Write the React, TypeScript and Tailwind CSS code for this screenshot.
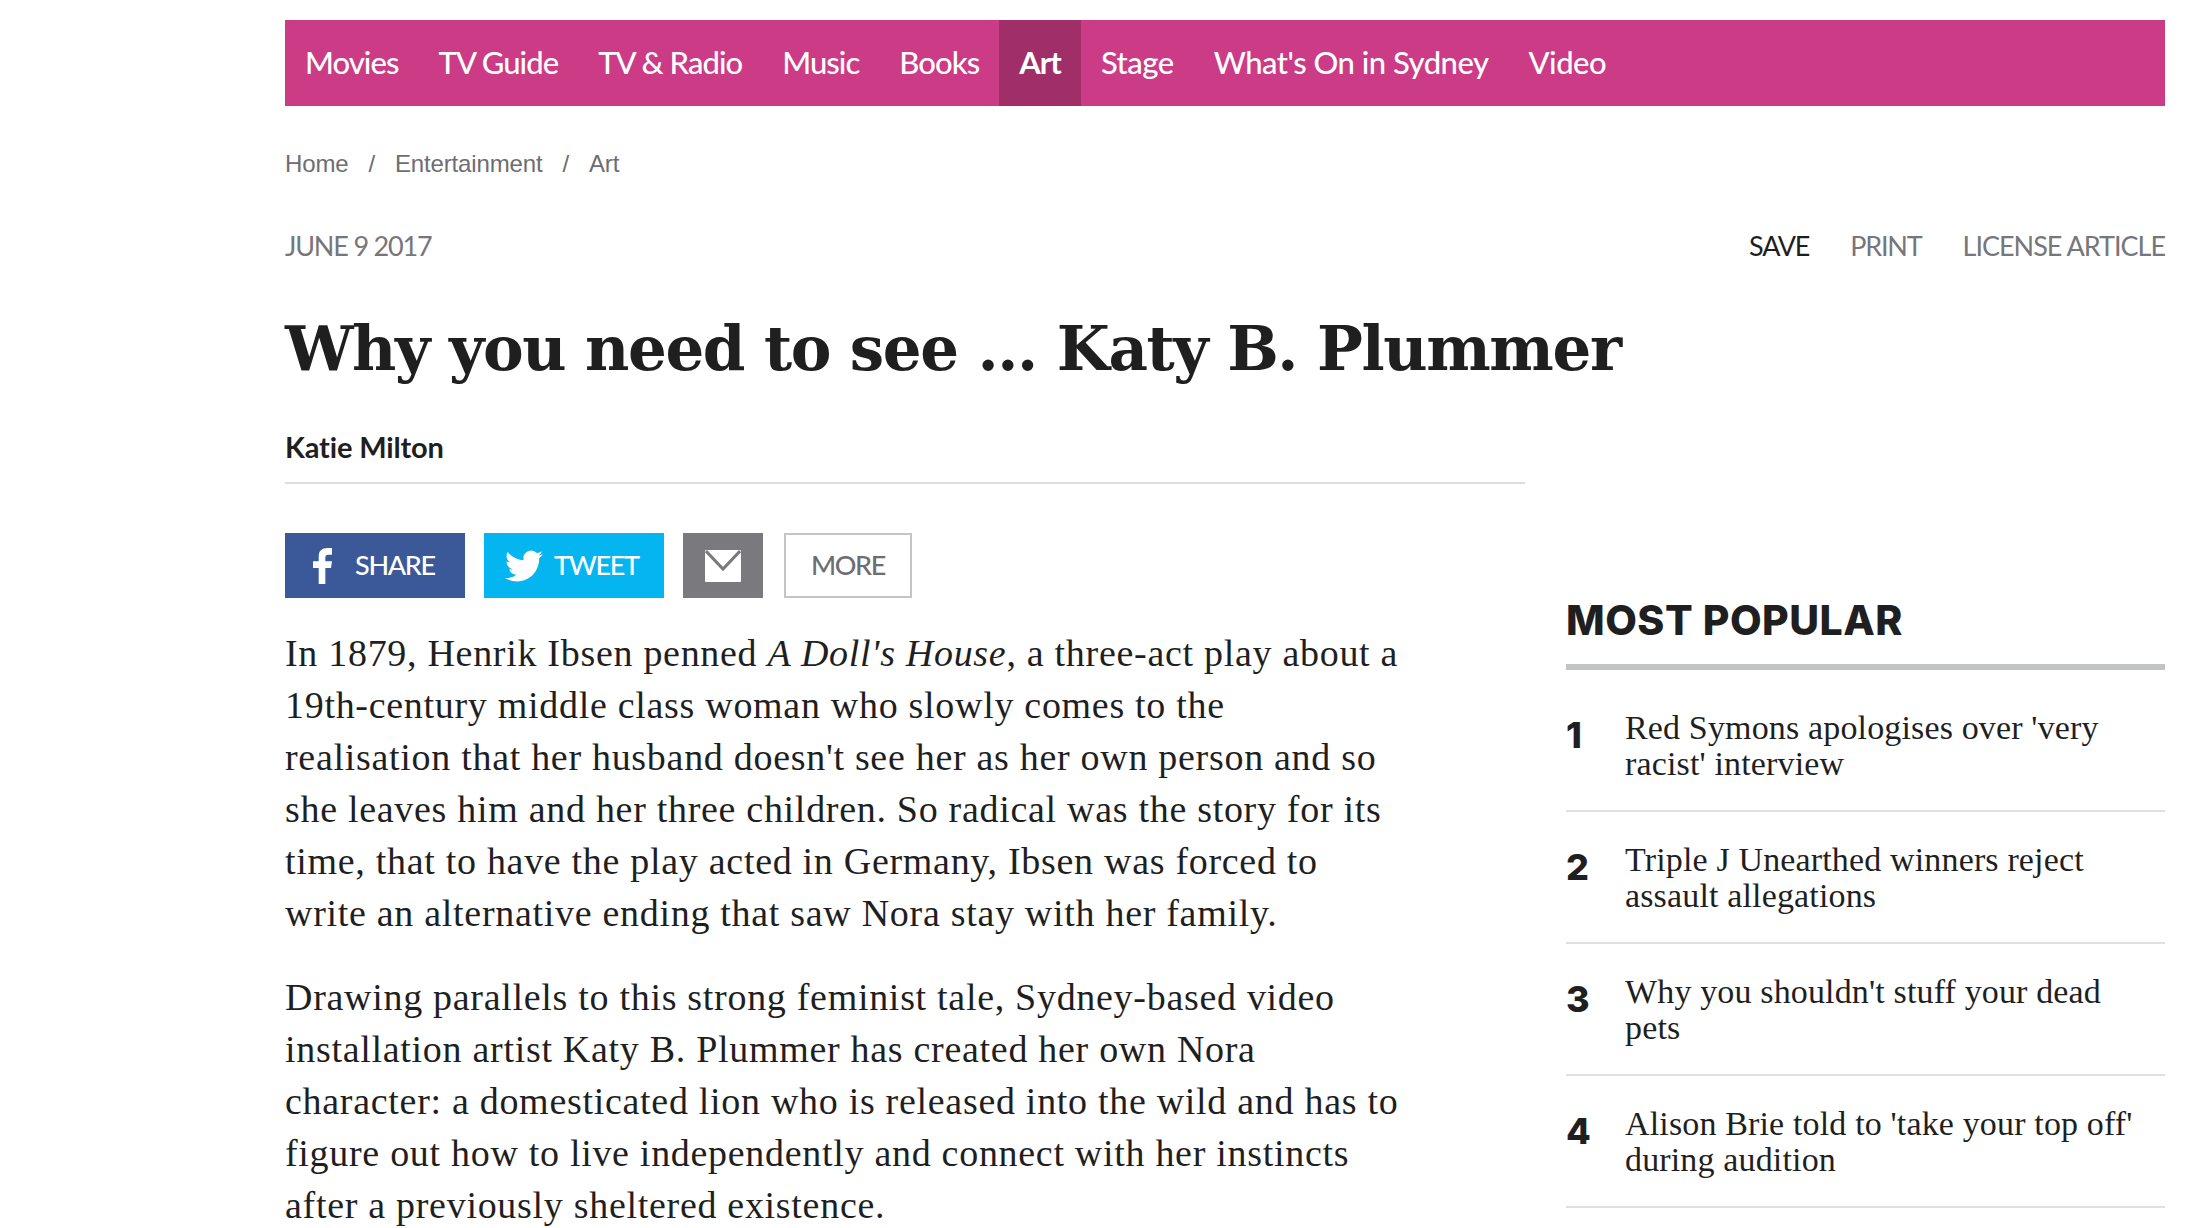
const navItems = ['Movies', 'TV Guide', 'TV & Radio', 'Music', 'Books', 'Art', 'Stage', "What's On in Sydney", 'Video'];
const looseItems = ['Stage', "What's On in Sydney", 'Video'];

const popular = [
  { n: 1, lines: ["Red Symons apologises over 'very", "racist' interview"] },
  { n: 2, lines: ['Triple J Unearthed winners reject', 'assault allegations'] },
  { n: 3, lines: ["Why you shouldn't stuff your dead", 'pets'] },
  { n: 4, lines: ["Alison Brie told to 'take your top off'", 'during audition'] },
];

const para2 = [
  'Drawing parallels to this strong feminist tale, Sydney-based video',
  'installation artist Katy B. Plummer has created her own Nora',
  'character: a domesticated lion who is released into the wild and has to',
  'figure out how to live independently and connect with her instincts',
  'after a previously sheltered existence.',
];

const para1 = [
  '19th-century middle class woman who slowly comes to the',
  "realisation that her husband doesn't see her as her own person and so",
  'she leaves him and her three children. So radical was the story for its',
  'time, that to have the play acted in Germany, Ibsen was forced to',
  'write an alternative ending that saw Nora stay with her family.',
];

const sans = "font-['Lato',sans-serif]";
const serif = "font-['Liberation_Serif',serif]";

export default function App() {
  return (
    <div className="h-[1228px] overflow-hidden bg-white pl-[285px] pr-[38px] pt-5 text-[#1f1f1f]">
      <nav className={`flex h-[86px] items-center bg-[#cc3b85] ${sans} text-[31px] text-white`}>
        {navItems.map(item => (
          <a
            key={item}
            className={`flex h-full items-center px-5 pb-0.5 ${looseItems.includes(item) ? 'tracking-[-0.5px]' : 'tracking-[-0.95px]'} ${item === 'Art' ? 'bg-[#a02f69] font-bold' : 'font-medium'}`}
          >
            {item}
          </a>
        ))}
      </nav>

      <div className="mt-11 flex h-7 items-center gap-5 font-['Liberation_Sans',sans-serif] text-[24px] tracking-[-0.15px] text-[#6d6d72]">
        <span>Home</span>
        <span>/</span>
        <span>Entertainment</span>
        <span>/</span>
        <span>Art</span>
      </div>

      <div className={`mt-[54px] flex h-7 items-center justify-between ${sans} text-[27px] tracking-[-1.2px] text-[#77767b]`}>
        <span>JUNE 9 2017</span>
        <div className="flex gap-[41px]">
          <span className="text-[#1f1f1f]">SAVE</span>
          <span>PRINT</span>
          <span className="tracking-[-1px]">LICENSE ARTICLE</span>
        </div>
      </div>

      <h1 className="mt-[51px] font-['DejaVu_Serif',serif] text-[61px] font-bold leading-[76px] tracking-[-1.4px] whitespace-nowrap">
        Why you need to see ... Katy B. Plummer
      </h1>

      <div className="flex gap-[41px]">
        <main className="w-[1240px] shrink-0">
          <div className={`mt-[44px] h-8 ${sans} text-[29px] font-bold leading-8 tracking-[-0.15px]`}>Katie Milton</div>
          <div className="mt-[19px] h-0.5 bg-[#dddddd]" />

          <div className={`mt-[49px] flex h-[65px] ${sans} text-[27px] font-medium tracking-[-1.3px] text-white`}>
            <a className="flex w-[180px] items-center gap-[23px] bg-[#3b5998] pl-7">
              <svg viewBox="0 0 20 38" className="h-[36px] w-[19px] fill-white">
                <path d="M6 38V21H0v-7h6V9c0-6 3.500-9 9-9h5v7h-3.500C13.500 7 13 8.500 13 10.500V14h7l-1 7h-6v17z" />
              </svg>
              SHARE
            </a>
            <a className="ml-[19px] flex w-[180px] items-center gap-[11px] bg-[#05b5f0] pl-[21px]">
              <svg viewBox="0 0 24 24" className="h-[38px] w-[38px] fill-white">
                <path d="M23.950 4.570a10 10 0 0 1-2.820.770 4.960 4.960 0 0 0 2.160-2.720c-.950.550-2 .960-3.130 1.190a4.920 4.920 0 0 0-8.380 4.480C7.690 8.090 4.070 6.130 1.640 3.160a4.820 4.820 0 0 0-.660 2.470c0 1.710.870 3.210 2.190 4.100a4.900 4.900 0 0 1-2.230-.620v.060a4.920 4.920 0 0 0 3.950 4.830c-.720.200-1.480.230-2.220.080a4.940 4.940 0 0 0 4.600 3.420A9.870 9.870 0 0 1 0 19.540a13.940 13.940 0 0 0 7.550 2.210c9.050 0 14-7.500 14-13.980 0-.210 0-.420-.020-.630a9.940 9.940 0 0 0 2.420-2.570z" />
              </svg>
              TWEET
            </a>
            <a className="ml-[19px] flex w-20 items-center justify-center bg-[#7a797e]">
              <svg viewBox="0 0 36 32" className="h-[32px] w-[36px]">
                <path d="M1 0h34a1 1 0 0 1 1 1v30a1 1 0 0 1-1 1H1a1 1 0 0 1-1-1V1a1 1 0 0 1 1-1z" fill="#fff" />
                <path d="M1 1l17 18L35 1" fill="none" stroke="#7a797e" strokeWidth="3" />
              </svg>
            </a>
            <a className="ml-[21px] flex w-[128px] items-center justify-center border-2 border-[#c4c4c4] text-[#6d6d72]">MORE</a>
          </div>

          <div className={`mt-[29px] ${serif} text-[38px] leading-[52px] tracking-[0.7px] whitespace-nowrap`}>
            <p>
              In 1879, Henrik Ibsen penned <em>A Doll's House</em>, a three-act play about a
            </p>
            {para1.map(line => (
              <p key={line}>{line}</p>
            ))}
            <div className="mt-[32px]">
              {para2.map(line => (
                <p key={line}>{line}</p>
              ))}
            </div>
          </div>
        </main>

        <aside className="min-w-0 flex-1">
          <h2 className="mt-[211px] font-['Inter',sans-serif] text-[41px] font-extrabold leading-[44px] tracking-[0.5px]">MOST POPULAR</h2>
          <div className="mt-[22px] h-1.5 bg-[#c2c3c5]" />
          <ul>
            {popular.map(item => (
              <li key={item.n} className="flex h-[132px] items-start border-b-2 border-[#e0e0e0] pt-[30px] first:h-[142px] first:pt-[40px]">
                <span className="mt-[7px] w-[59px] shrink-0 font-['Inter',sans-serif] text-[36px] leading-none font-extrabold">{item.n}</span>
                <div className={`${serif} text-[34px] leading-[36px] tracking-[0.15px] whitespace-nowrap`}>
                  {item.lines.map(l => (
                    <div key={l}>{l}</div>
                  ))}
                </div>
              </li>
            ))}
          </ul>
        </aside>
      </div>
    </div>
  );
}
